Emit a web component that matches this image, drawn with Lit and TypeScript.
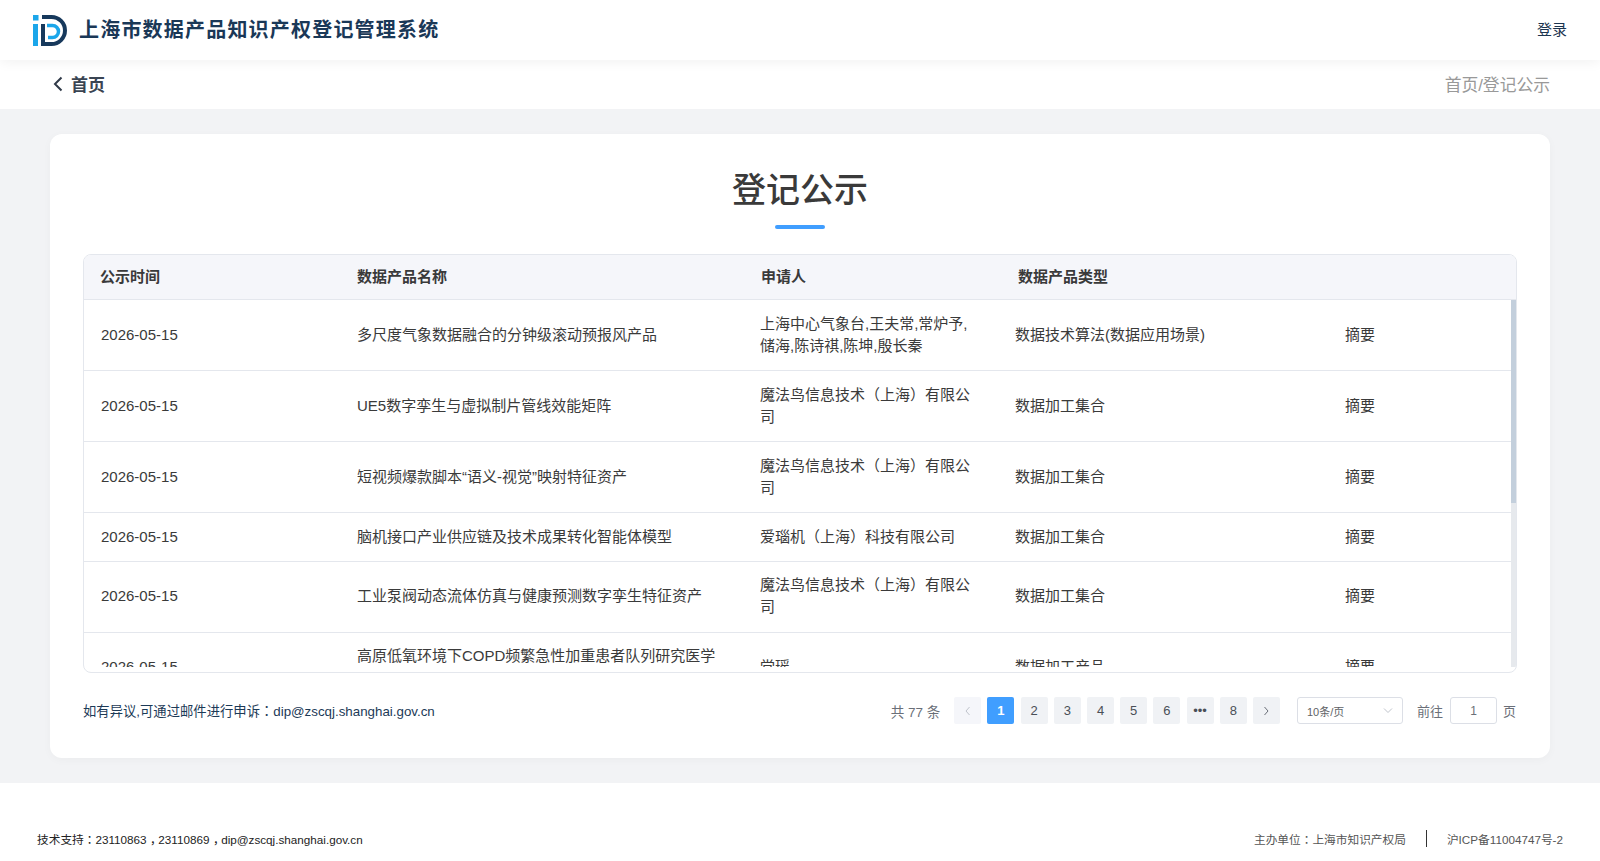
import { html, LitElement, css } from 'lit';
import { customElement } from 'lit/decorators.js';

const rows = [
  { date: '2026-05-15', name: '多尺度气象数据融合的分钟级滚动预报风产品', who: '上海中心气象台,王夫常,常炉予,储海,陈诗祺,陈坤,殷长秦', type: '数据技术算法(数据应用场景)' },
  { date: '2026-05-15', name: 'UE5数字孪生与虚拟制片管线效能矩阵', who: '魔法鸟信息技术（上海）有限公司', type: '数据加工集合' },
  { date: '2026-05-15', name: '短视频爆款脚本“语义-视觉”映射特征资产', who: '魔法鸟信息技术（上海）有限公司', type: '数据加工集合' },
  { date: '2026-05-15', name: '脑机接口产业供应链及技术成果转化智能体模型', who: '爱瑙机（上海）科技有限公司', type: '数据加工集合' },
  { date: '2026-05-15', name: '工业泵阀动态流体仿真与健康预测数字孪生特征资产', who: '魔法鸟信息技术（上海）有限公司', type: '数据加工集合' },
  { date: '2026-05-15', name: '高原低氧环境下COPD频繁急性加重患者队列研究医学数据集', who: '党瑶', type: '数据加工产品' },
];

@customElement('app-root')
export class AppRoot extends LitElement {
  static styles = css`
    :host {
      display: block;
      height: 861px;
      overflow: hidden;
      font-family: "Liberation Sans", "Noto Sans CJK SC", sans-serif;
      background: #f2f3f5;
      color: #333;
    }
    /* centred full-width punctuation, as in the reference */
    .tc { font-family: "Noto Sans CJK TC", sans-serif; }
    .cm { padding-left: 0.3em; letter-spacing: -0.3em; }
    .top {
      height: 60px;
      background: #fff;
      display: flex;
      align-items: center;
      padding: 0 33px;
      position: relative;
      z-index: 2;
      box-shadow: 0 2px 12px rgba(0, 0, 0, 0.06);
    }
    .logo { width: 34px; height: 31px; margin-right: 12px; }
    .sys {
      font-size: 20px;
      font-weight: 700;
      letter-spacing: 1.2px;
      color: #1a3857;
      flex: 1;
      padding-bottom: 4px;
    }
    .login { font-size: 15px; color: #1c3550; padding-bottom: 4px; }
    .crumb {
      height: 49px;
      background: #fff;
      display: flex;
      align-items: center;
      justify-content: space-between;
      padding: 0 50px 2px 52px;
      box-sizing: border-box;
    }
    .back {
      display: flex;
      align-items: center;
      font-size: 17px;
      font-weight: 700;
      color: #3a4452;
      gap: 7px;
    }
    .back svg { width: 12px; height: 16px; }
    .path { font-size: 16.800px; color: #999; }
    .main { height: 674px; padding: 25px 50px; box-sizing: border-box; }
    .card {
      height: 624px;
      box-sizing: border-box;
      background: #fff;
      border-radius: 12px;
      padding: 32px 33px 0;
      box-shadow: 0 2px 10px rgba(0, 0, 0, 0.03);
    }
    h1 {
      margin: 0;
      text-align: center;
      font-size: 34px;
      line-height: 48px;
      font-weight: 500;
      color: #3a3a3a;
    }
    .rule {
      width: 50px;
      height: 4px;
      margin: 11px auto 25px;
      border-radius: 2px;
      background: #409eff;
    }
    .table {
      position: relative;
      height: 419px;
      box-sizing: border-box;
      border: 1px solid #e4e7ed;
      border-radius: 8px;
      overflow: hidden;
      font-size: 15px;
    }
    .head, .row {
      display: grid;
      align-items: center;
      line-height: 22px;
    }
    .head {
      grid-template-columns: 257px 404px 257px 1fr;
      height: 45px;
      background: #f5f6fa;
      border-bottom: 1px solid #e4e7ed;
      box-sizing: border-box;
      font-weight: 700;
      color: #3a3a3a;
    }
    .row {
      grid-template-columns: 256px 403px 255px 330px 1fr;
      border-bottom: 1px solid #e4e7ed;
      padding: 13px 0 13px 1px;
      color: #3a3a3a;
    }
    .row:nth-child(5) { padding-top: 12px; padding-bottom: 14px; }
    .row:nth-child(6) { padding-top: 11.500px; padding-bottom: 14.500px; }
    .head div, .row div { padding: 0 16px; }
    .row .who { padding-right: 19px; }
    .body { height: 367px; overflow: hidden; }
    .track {
      position: absolute;
      top: 45px;
      right: 0;
      width: 5.500px;
      height: 367px;
      background: #e6e9ed;
    }
    .thumb { height: 203px; background: #c3cfdc; }
    .foot {
      display: flex;
      align-items: center;
      height: 75px;
      font-size: 13px;
      color: #6a6f78;
      padding-right: 1px;
    }
    .mail { flex: 1; color: #1c3a57; font-size: 13.330px; padding-bottom: 1px; }
    .total { font-size: 13.500px; margin-right: 14px; }
    .pages { display: flex; gap: 6.200px; margin-right: 17px; }
    .pg {
      width: 27px;
      height: 27px;
      display: flex;
      align-items: center;
      justify-content: center;
      border-radius: 2px;
      background: #f0f2f5;
      color: #4a4f57;
      font-size: 13px;
    }
    .pg svg { width: 8px; height: 10px; }
    .pg.off { background: #f5f6fa; color: #c0c4cc; }
    .pg.on { background: #409eff; color: #fff; font-weight: 700; }
    .pick {
      width: 106px;
      height: 27px;
      box-sizing: border-box;
      border: 1px solid #dcdfe6;
      border-radius: 3px;
      display: flex;
      align-items: center;
      justify-content: space-between;
      padding: 0 9px;
      font-size: 11px;
      color: #606266;
      margin-right: 14px;
    }
    .pick svg { width: 10px; height: 7px; }
    .input {
      width: 47px;
      height: 27px;
      box-sizing: border-box;
      border: 1px solid #dcdfe6;
      border-radius: 3px;
      display: flex;
      align-items: center;
      justify-content: center;
      font-size: 12px;
      margin: 0 6px 0 7px;
    }
    footer {
      height: 78px;
      background: #fff;
      display: flex;
      align-items: center;
      justify-content: space-between;
      padding: 32px 37px 0;
      box-sizing: border-box;
      font-size: 11.700px;
      color: #222;
    }
    .org { display: flex; align-items: center; color: #555; }
    .sep { width: 1px; height: 17px; background: #333; margin: 0 20px; }
  `;

  render() {
    return html`
      <div class="top">
        <svg class="logo" viewBox="0 0 34 31" fill="none">
          <rect width="5.500" height="5.500" fill="#1ba6ea" />
          <rect y="9" width="5" height="22" fill="#1ba6ea" />
          <path d="M9 2H18.500A13.500 13.500 0 0 1 18.500 29H10V9" stroke="#17395c" stroke-width="4" />
          <path d="M14 10.500H19.500A6 6 0 0 1 19.500 22.500H15" stroke="#1ba6ea" stroke-width="3.500" />
        </svg>
        <div class="sys">上海市数据产品知识产权登记管理系统</div>
        <div class="login">登录</div>
      </div>
      <div class="crumb">
        <div class="back">
          <svg viewBox="0 0 12 16" fill="none"><path d="M9.500 1.500L3 8l6.500 6.500" stroke="#303a48" stroke-width="2" /></svg>
          首页
        </div>
        <div class="path">首页/登记公示</div>
      </div>
      <div class="main">
        <div class="card">
          <h1>登记公示</h1>
          <div class="rule"></div>
          <div class="table">
            <div class="head">
              <div>公示时间</div><div>数据产品名称</div><div>申请人</div><div>数据产品类型</div>
            </div>
            <div class="body">
              ${rows.map(r => html`
                <div class="row">
                  <div>${r.date}</div><div>${r.name}</div><div class="who">${r.who}</div><div>${r.type}</div><div>摘要</div>
                </div>`)}
            </div>
            <div class="track"><div class="thumb"></div></div>
          </div>
          <div class="foot">
            <div class="mail">如有异议,可通过邮件进行申诉<span class="tc">：</span>dip@zscqj.shanghai.gov.cn</div>
            <div class="total">共 77 条</div>
            <div class="pages">
              <div class="pg off"><svg viewBox="0 0 8 10" fill="none"><path d="M5.500 1L2 5l3.500 4" stroke="#c0c4cc" /></svg></div>
              <div class="pg on">1</div>
              ${['2', '3', '4', '5', '6', '•••', '8'].map(p => html`<div class="pg">${p}</div>`)}
              <div class="pg"><svg viewBox="0 0 8 10" fill="none"><path d="M2.500 1L6 5 2.500 9" stroke="#6a6f78" /></svg></div>
            </div>
            <div class="pick">10条/页
              <svg viewBox="0 0 10 7" fill="none"><path d="M1 1.500l4 4 4-4" stroke="#c0c4cc" /></svg>
            </div>
            <span>前往</span>
            <div class="input">1</div>
            <span>页</span>
          </div>
        </div>
      </div>
      <footer>
        <div>技术支持<span class="tc">：</span>23110863<span class="cm">，</span>23110869<span class="cm">，</span>dip@zscqj.shanghai.gov.cn</div>
        <div class="org"><span>主办单位<span class="tc">：</span>上海市知识产权局</span><span class="sep"></span><span>沪ICP备11004747号-2</span></div>
      </footer>
    `;
  }
}
